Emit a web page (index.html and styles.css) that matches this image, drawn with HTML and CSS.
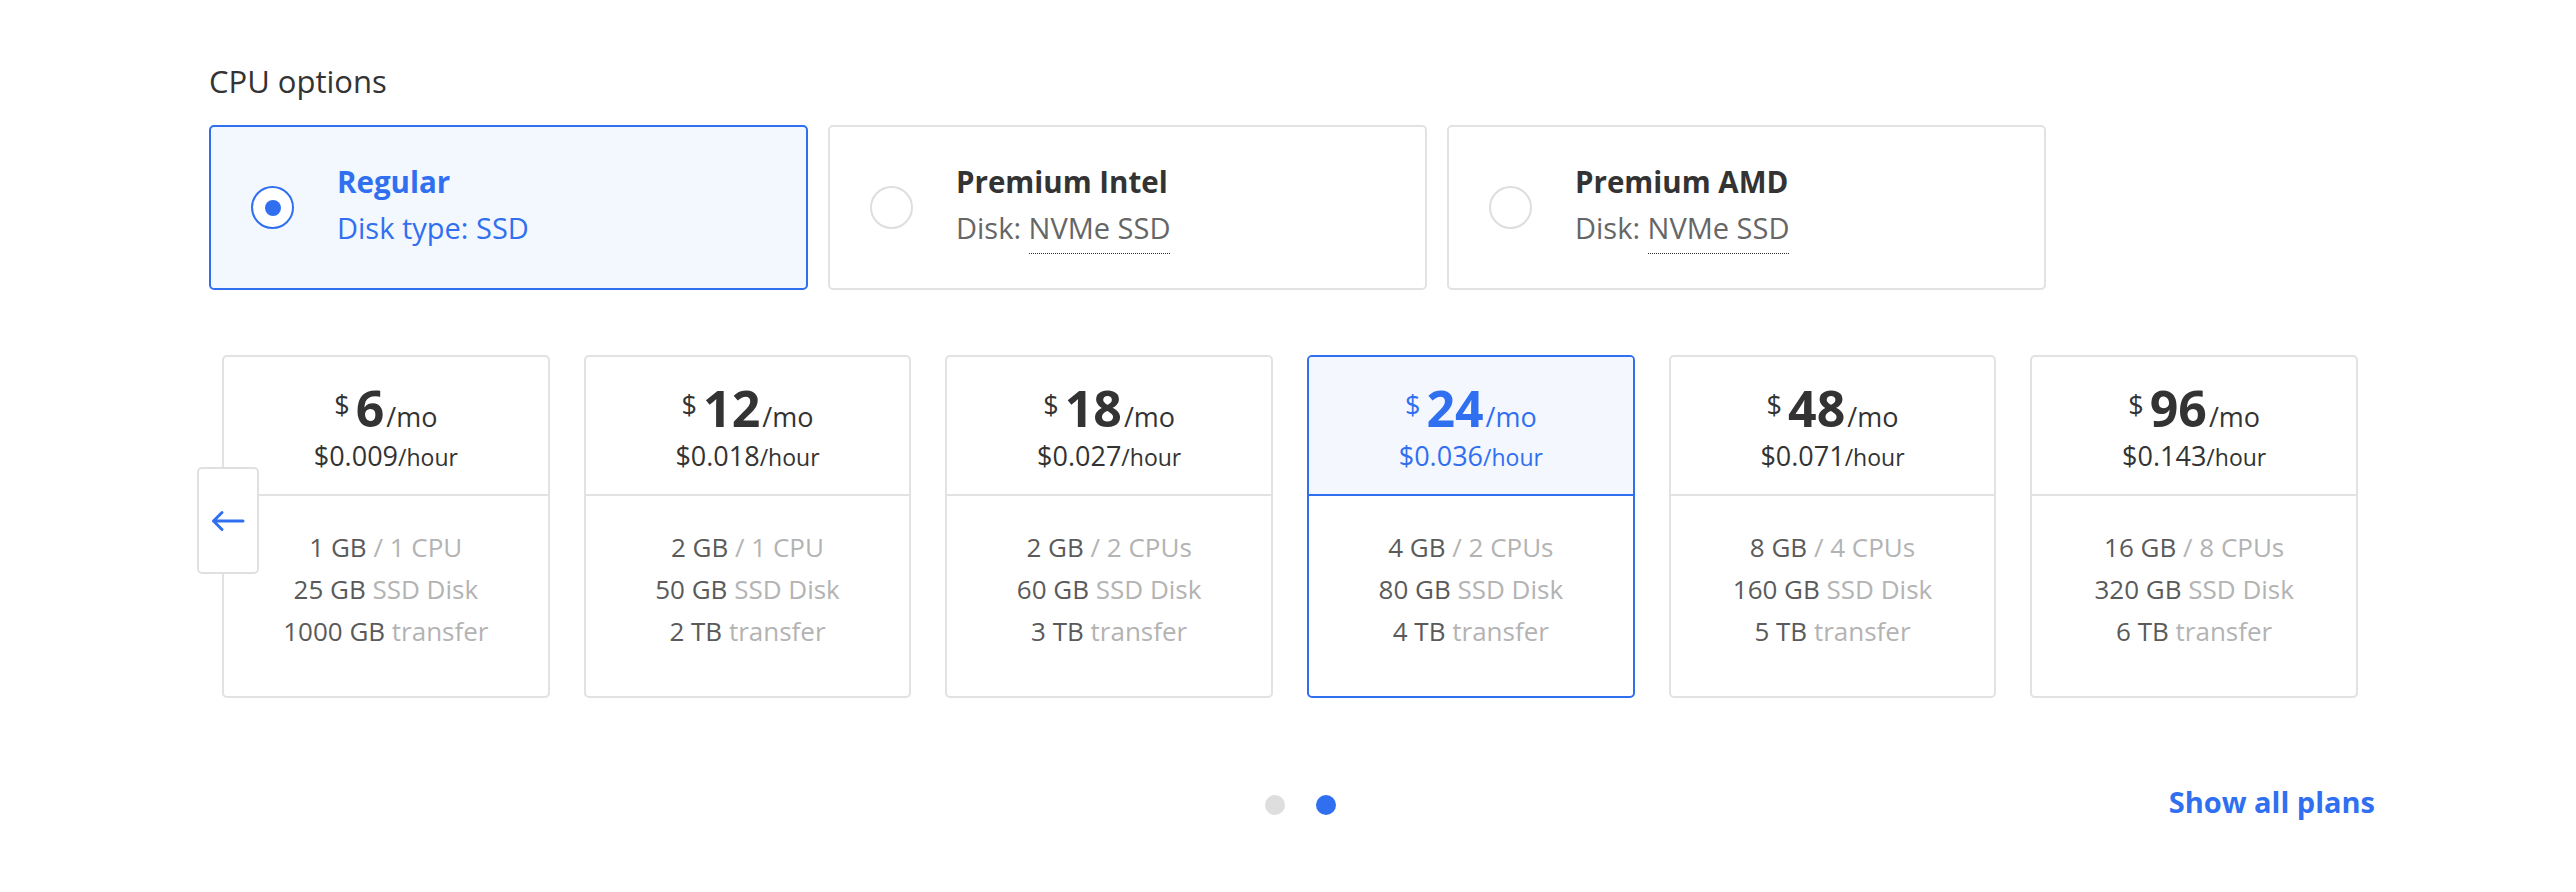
FILE: index.html
```html
<!DOCTYPE html>
<html lang="en">
<head>
<meta charset="utf-8">
<title>CPU options</title>
<link rel="stylesheet" href="styles.css">
</head>
<body>
<main class="page">
  <h2 class="section-title">CPU options</h2>
  <div class="cpu-options">
    <div class="cpu-card selected">
      <span class="radio"><span class="radio-dot"></span></span>
      <div class="cpu-text">
        <div class="cpu-name">Regular</div>
        <div class="cpu-sub">Disk type: SSD</div>
      </div>
    </div>
    <div class="cpu-card">
      <span class="radio"></span>
      <div class="cpu-text">
        <div class="cpu-name">Premium Intel</div>
        <div class="cpu-sub">Disk: <span class="dotted">NVMe SSD</span></div>
      </div>
    </div>
    <div class="cpu-card">
      <span class="radio"></span>
      <div class="cpu-text">
        <div class="cpu-name">Premium AMD</div>
        <div class="cpu-sub">Disk: <span class="dotted">NVMe SSD</span></div>
      </div>
    </div>
  </div>

  <div class="plans">
    <button class="prev" aria-label="Previous">
      <svg width="34" height="22" viewBox="0 0 34 22" fill="none" stroke="currentColor" stroke-width="3" stroke-linecap="round" stroke-linejoin="round"><path d="M32 11H2.5M11 2.5L2.5 11L11 19.5"/></svg>
    </button>
    <div class="plan">
      <div class="plan-head">
        <div class="price"><span class="cur">$</span><span class="amt">6</span><span class="per">/mo</span></div>
        <div class="hourly">$0.009<span class="per-h">/hour</span></div>
      </div>
      <div class="plan-body">
        <div>1 GB <span class="lt">/ 1 CPU</span></div>
        <div>25 GB <span class="lt">SSD Disk</span></div>
        <div>1000 GB <span class="lt">transfer</span></div>
      </div>
    </div>
    <div class="plan">
      <div class="plan-head">
        <div class="price"><span class="cur">$</span><span class="amt">12</span><span class="per">/mo</span></div>
        <div class="hourly">$0.018<span class="per-h">/hour</span></div>
      </div>
      <div class="plan-body">
        <div>2 GB <span class="lt">/ 1 CPU</span></div>
        <div>50 GB <span class="lt">SSD Disk</span></div>
        <div>2 TB <span class="lt">transfer</span></div>
      </div>
    </div>
    <div class="plan">
      <div class="plan-head">
        <div class="price"><span class="cur">$</span><span class="amt">18</span><span class="per">/mo</span></div>
        <div class="hourly">$0.027<span class="per-h">/hour</span></div>
      </div>
      <div class="plan-body">
        <div>2 GB <span class="lt">/ 2 CPUs</span></div>
        <div>60 GB <span class="lt">SSD Disk</span></div>
        <div>3 TB <span class="lt">transfer</span></div>
      </div>
    </div>
    <div class="plan selected">
      <div class="plan-head">
        <div class="price"><span class="cur">$</span><span class="amt">24</span><span class="per">/mo</span></div>
        <div class="hourly">$0.036<span class="per-h">/hour</span></div>
      </div>
      <div class="plan-body">
        <div>4 GB <span class="lt">/ 2 CPUs</span></div>
        <div>80 GB <span class="lt">SSD Disk</span></div>
        <div>4 TB <span class="lt">transfer</span></div>
      </div>
    </div>
    <div class="plan">
      <div class="plan-head">
        <div class="price"><span class="cur">$</span><span class="amt">48</span><span class="per">/mo</span></div>
        <div class="hourly">$0.071<span class="per-h">/hour</span></div>
      </div>
      <div class="plan-body">
        <div>8 GB <span class="lt">/ 4 CPUs</span></div>
        <div>160 GB <span class="lt">SSD Disk</span></div>
        <div>5 TB <span class="lt">transfer</span></div>
      </div>
    </div>
    <div class="plan">
      <div class="plan-head">
        <div class="price"><span class="cur">$</span><span class="amt">96</span><span class="per">/mo</span></div>
        <div class="hourly">$0.143<span class="per-h">/hour</span></div>
      </div>
      <div class="plan-body">
        <div>16 GB <span class="lt">/ 8 CPUs</span></div>
        <div>320 GB <span class="lt">SSD Disk</span></div>
        <div>6 TB <span class="lt">transfer</span></div>
      </div>
    </div>
  </div>

  <div class="footer">
    <div class="dots"><span class="dot"></span><span class="dot active"></span></div>
    <a class="show-all" href="#">Show all plans</a>
  </div>
</main>
</body>
</html>
```
FILE: styles.css
```css
* { box-sizing: border-box; }
html, body { margin: 0; padding: 0; background: #fff; }
body {
  font-family: "Open Sans", "Liberation Sans", sans-serif;
  color: #333;
}
.page {
  width: 2576px;
  padding: 61px 0 0 209px;
}
.section-title {
  margin: 0;
  font-size: 31px;
  line-height: 41px;
  font-weight: 400;
  color: #333;
}
.cpu-options {
  display: flex;
  gap: 20px;
  margin-top: 23px;
}
.cpu-card {
  width: 599px;
  height: 165px;
  border: 2px solid #e2e2e2;
  border-radius: 5px;
  background: #fff;
  display: flex;
  align-items: center;
  padding-left: 40px;
}
.cpu-card.selected {
  border-color: #3070f0;
  background: #f3f7fe;
}
.radio {
  width: 43px;
  height: 43px;
  border: 2px solid #dedede;
  border-radius: 50%;
  display: flex;
  align-items: center;
  justify-content: center;
  flex: none;
  background: #fff;
}
.selected .radio { border-color: #3070f0; }
.radio-dot {
  width: 16px;
  height: 16px;
  border-radius: 50%;
  background: #3070f0;
}
.cpu-text { margin-left: 43px; }
.cpu-name {
  font-size: 29.5px;
  line-height: 40px;
  font-weight: 700;
  color: #333;
}
.cpu-sub {
  font-size: 29px;
  line-height: 52px;
  color: #666;
}
.selected .cpu-name, .selected .cpu-sub { color: #3070f0; }
.dotted {
  border-bottom: 1px dotted #333;
  padding-bottom: 6px;
}

.plans {
  position: relative;
  display: grid;
  grid-template-columns: repeat(6, 1fr);
  gap: 34px;
  width: 2136px;
  margin: 65px 0 0 13px;
}
.plan {
  height: 343px;
  border: 2px solid #e2e2e2;
  border-radius: 5px;
  background: #fff;
  text-align: center;
  overflow: hidden;
}
.plan-head {
  height: 139px;
  padding-top: 26px;
  border-bottom: 2px solid #e2e2e2;
  color: #333;
}
.price {
  font-size: 50px;
  line-height: 44px;
  font-weight: 700;
  white-space: nowrap;
}
.cur {
  font-size: 27px;
  font-weight: 400;
  vertical-align: 12px;
  margin-right: 6px;
}
.per {
  font-size: 27px;
  font-weight: 400;
  margin-left: 2px;
}
.hourly {
  font-size: 27px;
  line-height: 34px;
}
.per-h { font-size: 23px; }
.plan.selected { border-color: #3070f0; }
.plan.selected .plan-head {
  background: #f4f7fe;
  border-bottom-color: #3070f0;
  color: #3070f0;
}
.plan-body {
  padding-top: 30px;
  font-size: 26px;
  line-height: 42px;
  color: #5a5a5a;
}
.lt { color: #b3b3b3; }

.prev {
  position: absolute;
  left: -25px;
  top: 112px;
  width: 62px;
  height: 107px;
  border: 2px solid #e0e0e0;
  border-radius: 5px;
  background: #fff;
  color: #3070f0;
  padding: 0;
  display: flex;
  align-items: center;
  justify-content: center;
  z-index: 2;
}
.prev svg { display: block; }

.footer {
  display: flex;
  align-items: center;
  justify-content: space-between;
  width: 2166px;
  margin-top: 84px;
  padding-left: 1056px;
}
.dots {
  display: flex;
  gap: 31px;
  margin-top: 6px;
}
.dot {
  width: 20px;
  height: 20px;
  border-radius: 50%;
  background: #dedede;
}
.dot.active { background: #3070f0; }
.show-all {
  font-size: 29px;
  line-height: 40px;
  font-weight: 700;
  color: #3070f0;
  text-decoration: none;
}
```
